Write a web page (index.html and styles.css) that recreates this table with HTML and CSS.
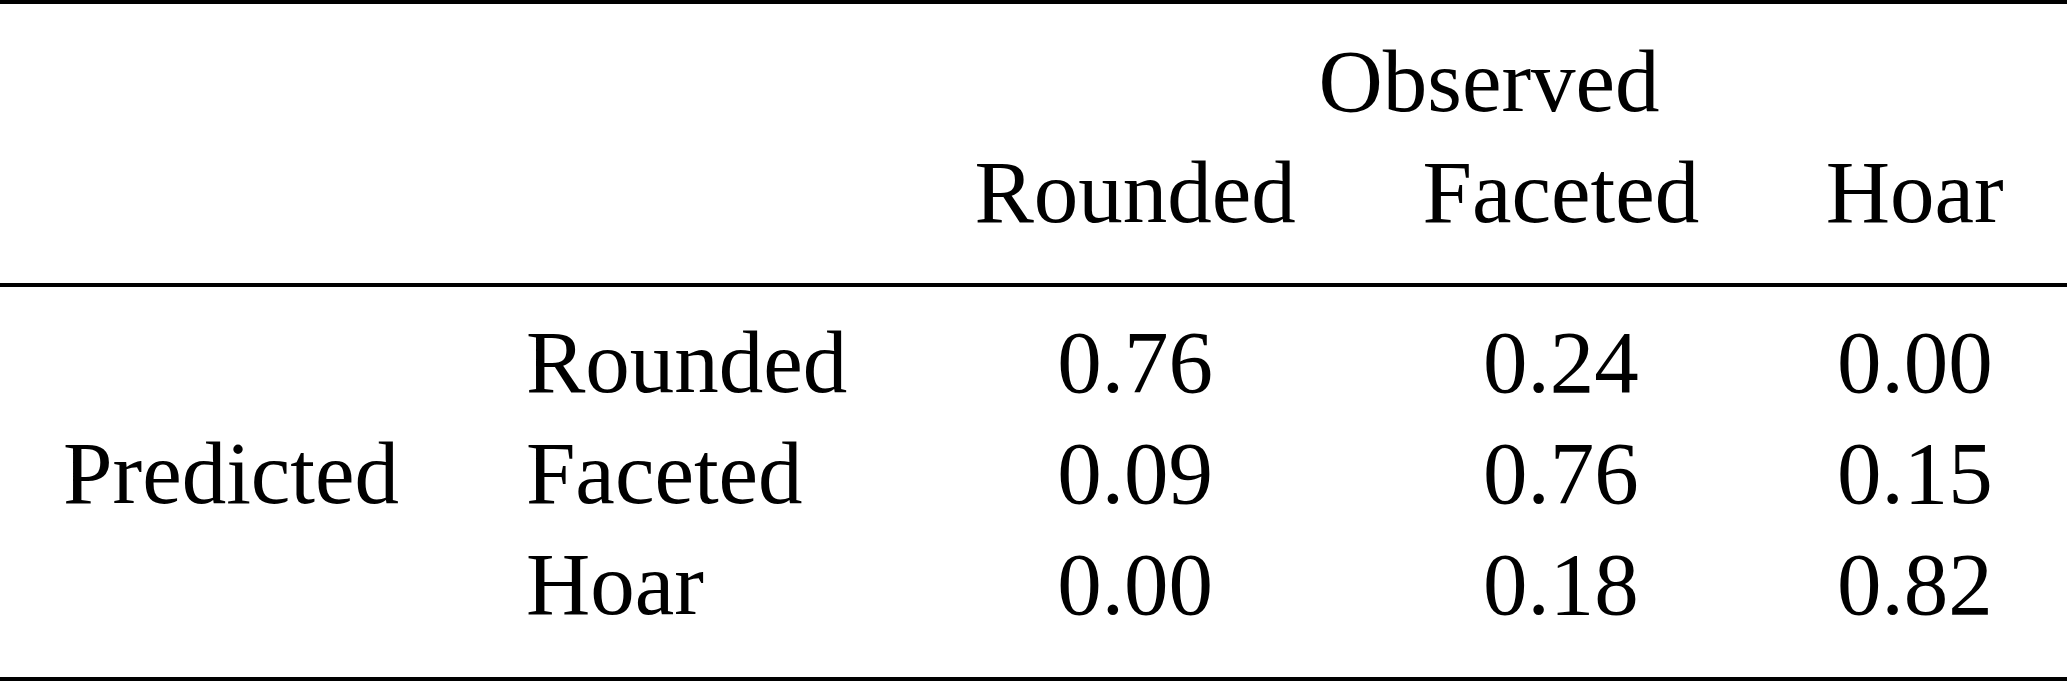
FILE: index.html
```html
<!DOCTYPE html>
<html lang="en">
<head>
    <meta charset="UTF-8">
    <title>Confusion matrix</title>
    <link rel="stylesheet" href="styles.css">
</head>
<body>
    <table class="matrix">
        <thead>
            <tr class="group-row">
                <th colspan="2"></th>
                <th colspan="3" class="group">Observed</th>
            </tr>
            <tr class="class-row">
                <th colspan="2"></th>
                <th>Rounded</th>
                <th>Faceted</th>
                <th>Hoar</th>
            </tr>
        </thead>
        <tbody>
            <tr>
                <td rowspan="3" class="multi">Predicted</td>
                <td class="label">Rounded</td>
                <td>0.76</td>
                <td>0.24</td>
                <td>0.00</td>
            </tr>
            <tr>
                <td class="label">Faceted</td>
                <td>0.09</td>
                <td>0.76</td>
                <td>0.15</td>
            </tr>
            <tr>
                <td class="label">Hoar</td>
                <td>0.00</td>
                <td>0.18</td>
                <td>0.82</td>
            </tr>
        </tbody>
    </table>
</body>
</html>
```

FILE: styles.css
```css
/* General Styles */
body {
    margin: 0;
    background: #fff;
    color: #000;
    font-family: 'Liberation Serif', 'Times New Roman', serif;
}
.matrix {
    width: 100%;
    border-collapse: collapse;
    border-top: 4px solid #000;
    border-bottom: 4px solid #000;
    font-size: 89px;
    line-height: 111px;
}
.matrix th,
.matrix td {
    padding: 0 63px;
    font-weight: normal;
    text-align: center;
    white-space: nowrap;
    vertical-align: middle;
}
.group-row th {
    padding-top: 22px;
}
.class-row th {
    padding-bottom: 35px;
    border-bottom: 4px solid #000;
}
tbody tr:first-child td {
    padding-top: 20px;
}
tbody tr:last-child td {
    padding-bottom: 37px;
}
.matrix td.label {
    text-align: left;
}
.matrix td.multi {
    text-align: left;
    padding: 20px 63px 37px;
}
```
